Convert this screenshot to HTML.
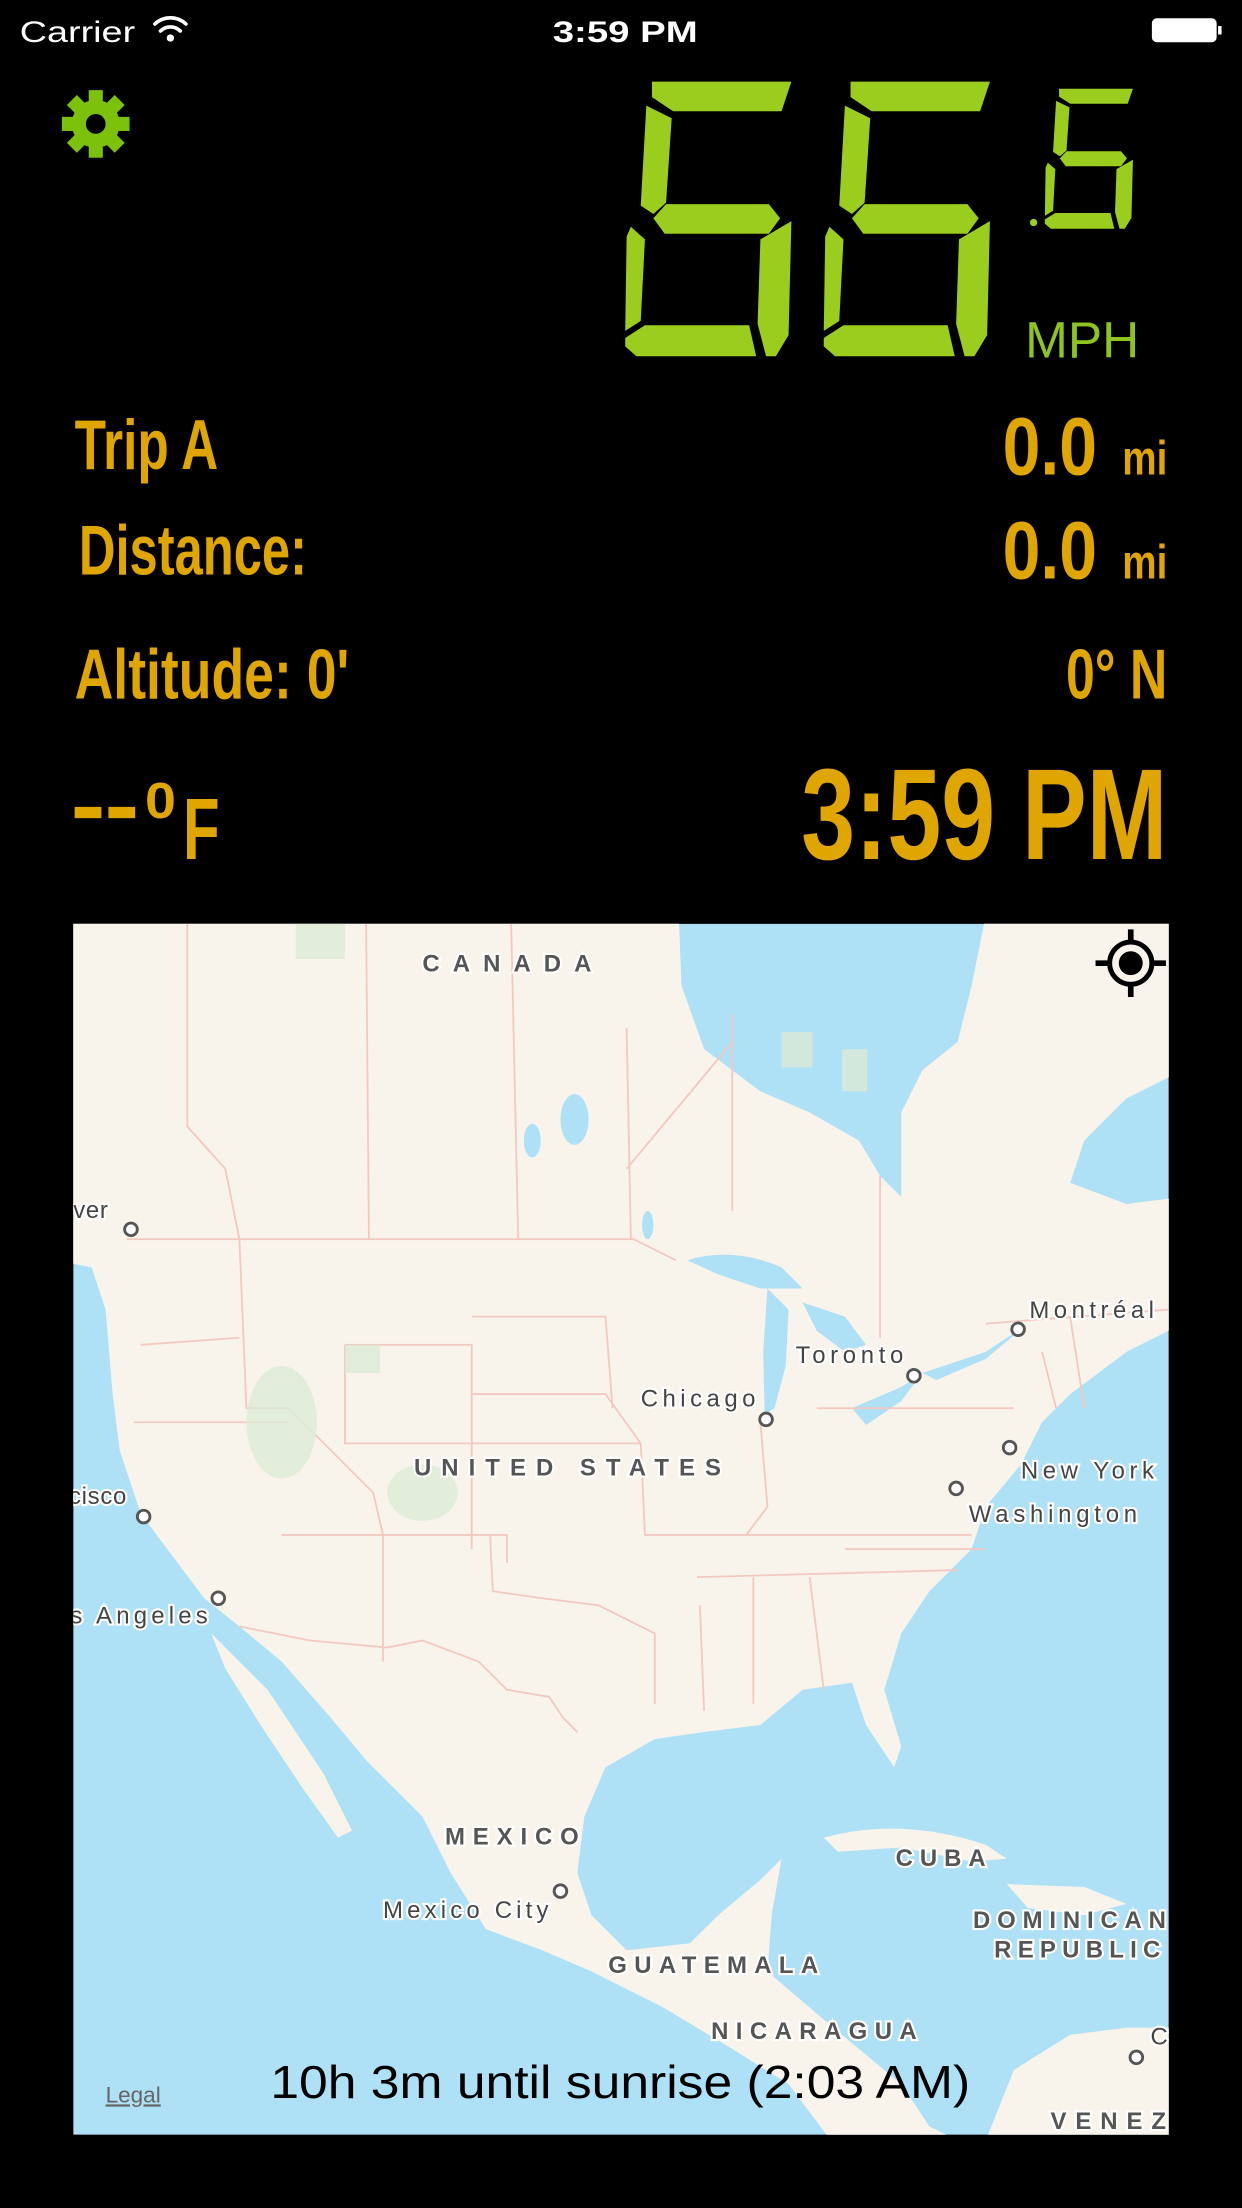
<!DOCTYPE html>
<html><head><meta charset="utf-8"><style>
html,body{margin:0;padding:0;background:#000;width:1242px;height:2208px;overflow:hidden}
svg{display:block}
.g{fill:#dfa500;font-family:"Liberation Sans Narrow","Liberation Sans",sans-serif;font-weight:bold}
.lbl{font-family:"Liberation Sans",sans-serif;fill:#555;font-weight:bold;letter-spacing:2px;font-size:17px;stroke:#fff;stroke-width:3px;paint-order:stroke}
.city{font-family:"Liberation Sans",sans-serif;fill:#444;font-size:17px;stroke:#fff;stroke-width:3px;paint-order:stroke;letter-spacing:0.5px}
.dot{fill:#fff;stroke:#555;stroke-width:2}
</style></head><body>
<svg width="1242" height="2208" viewBox="0 0 882 1568" xmlns="http://www.w3.org/2000/svg">
<defs>
<g id="six">
<polygon points="19,0 118,0 111,21 34,21 19,11"/>
<polygon points="15,17 33,26 29,86 20,94 11,88"/>
<polygon points="20,97 29,87 102,87 110,97 102,108 28,108"/>
<polygon points="4,103 14,112 11,170 0,177 1,110"/>
<polygon points="0,182 14,173 88,173 93,195 8,195 0,188"/>
<polygon points="96,112 118,99 116,180 107,195 100,195 94,172"/>
</g>
<clipPath id="mc"><rect x="52" y="656" width="778" height="860"/></clipPath>
</defs>
<rect width="882" height="1568" fill="#000"/>
<!-- status bar -->
<text x="14" y="30" fill="#fff" font-family="Liberation Sans,sans-serif" font-size="21" textLength="82" lengthAdjust="spacingAndGlyphs">Carrier</text>
<g fill="none" stroke="#fff" stroke-width="2.6" stroke-linecap="round">
<path d="M110 17 A16 16 0 0 1 132 17"/><path d="M114 22 A10 10 0 0 1 128 22"/></g>
<circle cx="121" cy="27" r="2.6" fill="#fff"/>
<text x="444" y="30" fill="#fff" font-family="Liberation Sans,sans-serif" font-size="21" font-weight="bold" text-anchor="middle" textLength="103" lengthAdjust="spacingAndGlyphs">3:59 PM</text>
<rect x="818" y="13" width="46" height="17" rx="3.5" fill="#fff"/>
<rect x="865" y="18.5" width="2.5" height="6" fill="#fff"/>
<!-- gear -->
<g transform="translate(68,88)" fill="#7cc10b">
<circle r="17"/>
<g><rect x="-5" y="-24" width="10" height="10"/><rect x="-5" y="14" width="10" height="10"/><rect x="-24" y="-5" width="10" height="10"/><rect x="14" y="-5" width="10" height="10"/></g>
<g transform="rotate(45)"><rect x="-5" y="-24" width="10" height="10"/><rect x="-5" y="14" width="10" height="10"/><rect x="-24" y="-5" width="10" height="10"/><rect x="14" y="-5" width="10" height="10"/></g>
<circle r="7" fill="#000"/>
</g>
<!-- speed -->
<g fill="#9acd1e">
<use href="#six" transform="translate(444,58)"/>
<use href="#six" transform="translate(585,58)"/>
<use href="#six" transform="translate(742,63) scale(0.53,0.51)"/>
<circle cx="734" cy="158" r="2.6"/>
</g>
<text x="728" y="254" fill="#8fc31e" font-family="Liberation Sans,sans-serif" font-size="36" textLength="81" lengthAdjust="spacingAndGlyphs">MPH</text>
<!-- info rows -->
<text class="g" x="53" y="333" font-size="50" textLength="102" lengthAdjust="spacingAndGlyphs">Trip A</text>
<text class="g" x="712" y="337" font-size="58" textLength="67" lengthAdjust="spacingAndGlyphs">0.0</text>
<text class="g" x="797" y="337" font-size="34" textLength="32" lengthAdjust="spacingAndGlyphs">mi</text>
<text class="g" x="56" y="408" font-size="50" textLength="162" lengthAdjust="spacingAndGlyphs">Distance:</text>
<text class="g" x="712" y="411" font-size="58" textLength="67" lengthAdjust="spacingAndGlyphs">0.0</text>
<text class="g" x="797" y="411" font-size="34" textLength="32" lengthAdjust="spacingAndGlyphs">mi</text>
<text class="g" x="53" y="496" font-size="50" textLength="195" lengthAdjust="spacingAndGlyphs">Altitude: 0'</text>
<text class="g" x="757" y="496" font-size="50" textLength="72" lengthAdjust="spacingAndGlyphs">0° N</text>
<rect x="53" y="573" width="19" height="8" fill="#dfa500"/>
<rect x="77" y="573" width="19" height="8" fill="#dfa500"/>
<text class="g" x="103" y="581" font-size="36" textLength="22" lengthAdjust="spacingAndGlyphs">0</text>
<text class="g" x="130" y="610" font-size="62" textLength="26" lengthAdjust="spacingAndGlyphs">F</text>
<text class="g" x="569" y="610" font-size="92" textLength="260" lengthAdjust="spacingAndGlyphs">3:59 PM</text>
<!-- map -->
<g clip-path="url(#mc)">
<rect x="52" y="656" width="778" height="860" fill="#aee0f6"/>
<path fill="#f8f4ec" d="M40 650 L482 650 L484 700 L500 745 L540 775 L575 790 L610 810 L625 835 L640 850 L640 790 L655 760 L680 740 L690 700 L700 650 L840 650 L840 760 L800 780 L770 810 L760 840 L800 855 L840 850 L840 940 L800 960 L760 990 L740 1010 L725 1040 L700 1070 L690 1100 L660 1130 L640 1160 L628 1200 L640 1240 L635 1255 L615 1225 L605 1195 L570 1200 L540 1225 L500 1230 L465 1235 L430 1255 L415 1290 L410 1330 L420 1360 L445 1385 L490 1380 L510 1360 L540 1335 L555 1320 L548 1360 L545 1400 L580 1430 L610 1455 L640 1480 L660 1510 L680 1520 L590 1520 L560 1480 L520 1455 L470 1425 L420 1400 L385 1385 L345 1370 L320 1330 L300 1290 L260 1250 L235 1220 L200 1180 L170 1155 L145 1135 L115 1095 L100 1075 L85 1030 L80 990 L75 930 L65 900 L40 895 Z"/>
<path fill="#f8f4ec" d="M150 1160 L190 1200 L230 1260 L250 1300 L240 1305 L215 1270 L185 1225 L160 1185 Z"/>
<path fill="#f8f4ec" d="M585 1305 Q640 1290 700 1310 L715 1320 L690 1322 L640 1312 L595 1315 Z"/>
<path fill="#f8f4ec" d="M715 1338 L770 1340 L800 1352 L770 1360 L730 1355 Z"/>
<path fill="#f8f4ec" d="M700 1520 L720 1470 L760 1445 L800 1440 L840 1440 L840 1520 Z"/>
<g fill="#aee0f6">
<path d="M488 895 Q520 885 555 900 L570 915 L540 915 L510 905 Z"/>
<path d="M545 915 L560 930 L558 970 L550 1000 L543 1005 L542 960 Z"/>
<path d="M570 925 L600 935 L615 955 L600 960 L580 945 Z"/>
<path d="M605 1000 L640 985 L655 975 L640 995 L615 1012 Z"/>
<path d="M655 975 L700 960 L730 940 L700 965 L665 980 Z"/>
<ellipse cx="408" cy="795" rx="10" ry="18"/><ellipse cx="378" cy="810" rx="6" ry="12"/>
<ellipse cx="460" cy="870" rx="4" ry="10"/>
</g>
<g fill="none" stroke="#f2c9c0" stroke-width="1.3">
<path d="M133 656 L133 800 L160 830 L170 880"/>
<path d="M260 656 L262 880"/><path d="M363 656 L368 880"/><path d="M445 730 L448 880"/>
<path d="M90 880 L450 880 L480 895"/>
<path d="M170 880 L175 1000 L205 1000 L265 1060 L272 1090"/>
<path d="M245 955 L335 955 L335 1100"/><path d="M335 935 L430 935 L435 1000"/>
<path d="M245 955 L245 1025 L455 1025"/><path d="M100 955 L170 950"/>
<path d="M95 1010 L205 1010"/><path d="M335 990 L430 990 L455 1025"/>
<path d="M200 1090 L360 1090 L360 1110"/><path d="M272 1090 L272 1180"/>
<path d="M455 1025 L458 1090 L540 1090 L690 1090"/><path d="M348 1090 L350 1130 L385 1135 L425 1140 L465 1160 L465 1210"/>
<path d="M540 1010 L545 1070 L530 1090"/><path d="M580 1000 L720 1000"/>
<path d="M497 1140 L500 1215"/><path d="M535 1120 L535 1210"/><path d="M575 1120 L585 1200"/>
<path d="M495 1120 L680 1115"/><path d="M600 1100 L700 1100"/>
<path d="M170 1155 L220 1165 L275 1170 L300 1165 L340 1180 L360 1200 L390 1205 L400 1220 L410 1230"/>
<path d="M625 835 L625 950"/><path d="M520 720 L520 860"/><path d="M445 830 L520 740"/>
<path d="M700 940 L830 930"/><path d="M740 960 L750 1000"/><path d="M760 935 L770 1000"/>
</g>
<g fill="#dcebd6" opacity="0.8">
<rect x="210" y="656" width="35" height="25"/><rect x="598" y="745" width="18" height="30"/><rect x="555" y="733" width="22" height="25"/>
<rect x="245" y="955" width="25" height="20"/><ellipse cx="200" cy="1010" rx="25" ry="40"/><ellipse cx="300" cy="1060" rx="25" ry="20"/>
</g>
<!-- labels -->
<text class="lbl" x="300" y="690" font-size="19" textLength="122">CANADA</text>
<text class="lbl" x="294" y="1048" font-size="19" textLength="220">UNITED STATES</text>
<text class="lbl" x="316" y="1310" textLength="97">MEXICO</text>
<text class="lbl" x="636" y="1325" textLength="66">CUBA</text>
<text class="lbl" x="691" y="1369" textLength="139">DOMINICAN</text>
<text class="lbl" x="706" y="1390" textLength="120">REPUBLIC</text>
<text class="lbl" x="432" y="1401" textLength="151">GUATEMALA</text>
<text class="lbl" x="505" y="1448" textLength="148">NICARAGUA</text>
<text class="lbl" x="746" y="1512" textLength="84">VENEZ</text>
<text class="city" x="52" y="865">ver</text>
<text class="city" x="731" y="936" textLength="89">Montréal</text>
<text class="city" x="565" y="968" textLength="77">Toronto</text>
<text class="city" x="455" y="999" textLength="82">Chicago</text>
<text class="city" x="725" y="1050" textLength="95">New York</text>
<text class="city" x="688" y="1081" textLength="120">Washington</text>
<text class="city" x="49" y="1068">cisco</text>
<text class="city" x="50" y="1153" textLength="98">s Angeles</text>
<text class="city" x="272" y="1362" textLength="118">Mexico City</text>
<text class="city" x="817" y="1452">C</text>
<g class="dot">
<circle cx="93" cy="873" r="4.5"/><circle cx="102" cy="1077" r="4.5"/><circle cx="155" cy="1135" r="4.5"/>
<circle cx="544" cy="1008" r="4.5"/><circle cx="649" cy="977" r="4.5"/><circle cx="723" cy="944" r="4.5"/>
<circle cx="717" cy="1028" r="4.5"/><circle cx="679" cy="1057" r="4.5"/><circle cx="398" cy="1343" r="4.5"/>
<circle cx="807" cy="1461" r="4.5"/></g>
<!-- locate -->
<g transform="translate(803,684)">
<circle r="15" fill="none" stroke="#000" stroke-width="3.5"/><circle r="8.5" fill="#000"/>
<rect x="-2" y="-24" width="4" height="10"/><rect x="-2" y="14" width="4" height="10"/>
<rect x="-25" y="-2" width="10" height="4"/><rect x="15" y="-2" width="10" height="4"/>
</g>
<text x="75" y="1493" fill="#666" font-family="Liberation Sans,sans-serif" font-size="16" text-decoration="underline">Legal</text>
<text x="192" y="1490" fill="#000" font-family="Liberation Sans,sans-serif" font-size="33" textLength="497" lengthAdjust="spacingAndGlyphs">10h 3m until sunrise (2:03 AM)</text>
</g>
</svg>
</body></html>
